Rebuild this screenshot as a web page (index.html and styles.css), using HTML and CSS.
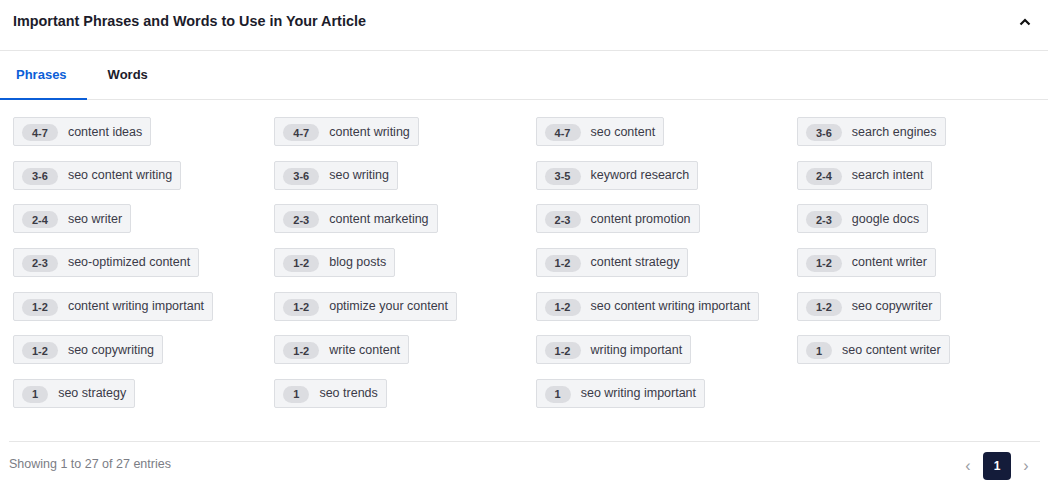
FILE: index.html
```html
<!DOCTYPE html>
<html>
<head>
<meta charset="utf-8">
<link rel="stylesheet" href="styles.css">
</head>
<body>
<div class="panel">
  <div class="header">
    <h2 class="title">Important Phrases and Words to Use in Your Article</h2>
    <svg class="chevron" width="12" height="8" viewBox="0 0 12 8"><path d="M1.5 6.5 L6 2 L10.5 6.5" fill="none" stroke="#111" stroke-width="2.2"/></svg>
  </div>
  <div class="tabs">
    <div class="tab active">Phrases</div>
    <div class="tab">Words</div>
  </div>
  <div class="grid">
    <div class="chip"><span class="badge">4-7</span><span class="label">content ideas</span></div>
    <div class="chip"><span class="badge">4-7</span><span class="label">content writing</span></div>
    <div class="chip"><span class="badge">4-7</span><span class="label">seo content</span></div>
    <div class="chip"><span class="badge">3-6</span><span class="label">search engines</span></div>

    <div class="chip"><span class="badge">3-6</span><span class="label">seo content writing</span></div>
    <div class="chip"><span class="badge">3-6</span><span class="label">seo writing</span></div>
    <div class="chip"><span class="badge">3-5</span><span class="label">keyword research</span></div>
    <div class="chip"><span class="badge">2-4</span><span class="label">search intent</span></div>

    <div class="chip"><span class="badge">2-4</span><span class="label">seo writer</span></div>
    <div class="chip"><span class="badge">2-3</span><span class="label">content marketing</span></div>
    <div class="chip"><span class="badge">2-3</span><span class="label">content promotion</span></div>
    <div class="chip"><span class="badge">2-3</span><span class="label">google docs</span></div>

    <div class="chip"><span class="badge">2-3</span><span class="label">seo-optimized content</span></div>
    <div class="chip"><span class="badge">1-2</span><span class="label">blog posts</span></div>
    <div class="chip"><span class="badge">1-2</span><span class="label">content strategy</span></div>
    <div class="chip"><span class="badge">1-2</span><span class="label">content writer</span></div>

    <div class="chip"><span class="badge">1-2</span><span class="label">content writing important</span></div>
    <div class="chip"><span class="badge">1-2</span><span class="label">optimize your content</span></div>
    <div class="chip"><span class="badge">1-2</span><span class="label">seo content writing important</span></div>
    <div class="chip"><span class="badge">1-2</span><span class="label">seo copywriter</span></div>

    <div class="chip"><span class="badge">1-2</span><span class="label">seo copywriting</span></div>
    <div class="chip"><span class="badge">1-2</span><span class="label">write content</span></div>
    <div class="chip"><span class="badge">1-2</span><span class="label">writing important</span></div>
    <div class="chip"><span class="badge">1</span><span class="label">seo content writer</span></div>

    <div class="chip"><span class="badge">1</span><span class="label">seo strategy</span></div>
    <div class="chip"><span class="badge">1</span><span class="label">seo trends</span></div>
    <div class="chip"><span class="badge">1</span><span class="label">seo writing important</span></div>
  </div>
  <div class="footer">
    <div class="info">Showing 1 to 27 of 27 entries</div>
    <div class="pager">
      <span class="arrow">&#8249;</span>
      <span class="page">1</span>
      <span class="arrow">&#8250;</span>
    </div>
  </div>
</div>
</body>
</html>
```
FILE: styles.css
```css
* { box-sizing: border-box; }
html, body { margin: 0; padding: 0; background: #fff; }
body { font-family: "Liberation Sans", Arial, sans-serif; color: #222; }
.panel { width: 1048px; }
.header {
  height: 51px;
  display: flex;
  align-items: center;
  justify-content: space-between;
  padding: 0 17px 9px 13px;
  border-bottom: 1px solid #e6e6e6;
}
.title { margin: 0; font-size: 14.4px; font-weight: 700; color: #1c1c2b; }
.chevron { display: block; margin-top: 2px; }
.tabs {
  height: 49px;
  display: flex;
  border-bottom: 1px solid #e6e6e6;
}
.tab {
  display: flex;
  align-items: center;
  font-size: 13px;
  font-weight: 700;
  color: #1c1c2b;
  padding: 0 21px 0 21px;
  border-bottom: 2px solid transparent;
  margin-bottom: -1px;
}
.tab.active { color: #0b5ed7; border-bottom-color: #0b5ed7; padding: 0 20px 0 16px; }
.grid {
  display: grid;
  grid-template-columns: repeat(4, 261.3px);
  row-gap: 14.67px;
  padding: 17px 0 0 13px;
  height: 341px;
  align-content: start;
}
.chip {
  justify-self: start;
  display: flex;
  align-items: center;
  height: 29px;
  padding: 0 8px;
  background: #f3f4f6;
  border: 1px solid #dcdee2;
  border-radius: 2px;
}
.badge {
  height: 17px;
  padding: 0 10px;
  border-radius: 9px;
  background: #dcdde1;
  font-size: 11px;
  font-weight: 700;
  color: #3b3b45;
  display: flex;
  align-items: center;
  margin-top: 2px;
}
.label {
  margin-left: 10px;
  font-size: 12.5px;
  color: #3a3a48;
}
.footer {
  margin: 0 8px 0 9px;
  border-top: 1px solid #e6e6e6;
  height: 44px;
  display: flex;
  align-items: center;
  justify-content: space-between;
  padding-top: 1px;
}
.info { font-size: 12.5px; color: #7b7d85; }
.pager { display: flex; align-items: center; margin-top: 3px; padding-right: 7px; }
.arrow { color: #9a9ca3; font-size: 16px; width: 14px; text-align: center; }
.page {
  width: 28px;
  height: 28px;
  margin: 0 8px 0 8px;
  background: #141c3a;
  color: #fff;
  border-radius: 4px;
  font-size: 12px;
  font-weight: 700;
  display: flex;
  align-items: center;
  justify-content: center;
}
```
